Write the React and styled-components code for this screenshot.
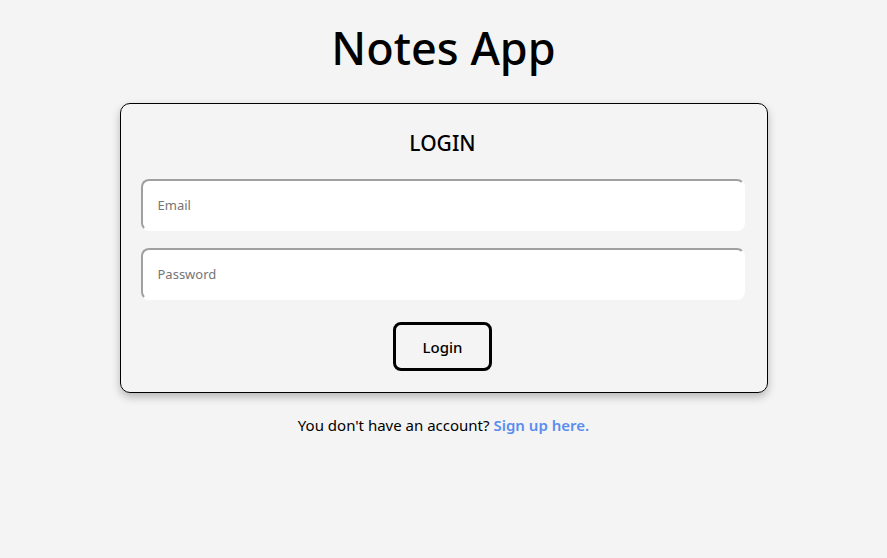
import React from 'react';
import styled, { createGlobalStyle } from 'styled-components';

const GlobalStyle = createGlobalStyle`
    body {
        margin: 0;
        background-color: #f4f4f4;
        font-family: "Noto Sans", "Open Sans", sans-serif;
        color: #000;
    }
`
const Page = styled.div`
    display: flex;
    flex-direction: column;
    align-items: center;
    padding-top: 18px;
`
const Title = styled.h1`
    margin: 0;
    font-size: 45px;
    font-weight: 500;
    line-height: 60px;
`
const Card = styled.form`
    margin-top: 25px;
    width: 648px;
    box-sizing: border-box;
    border: 1px solid #000;
    border-radius: 10px;
    box-shadow: 0 4px 8px rgba(0, 0, 0, 0.25);
    padding: 23px 22px 21px 20px;
    display: flex;
    flex-direction: column;
    align-items: center;
`
const CardTitle = styled.h2`
    margin: 0 0 20px 0;
    font-size: 21px;
    font-weight: 500;
    line-height: 32px;
`
const Input = styled.input`
    width: 100%;
    height: 52px;
    box-sizing: border-box;
    margin-bottom: 17px;
    padding: 0 15px;
    background: #fff;
    border-style: solid;
    border-width: 2px;
    border-color: #a0a0a0 #fff #fff #a0a0a0;
    border-radius: 8px;
    font-family: inherit;
    font-size: 13px;
    outline: none;
    &::placeholder {
        color: #757575;
    }
`
const Button = styled.button`
    margin-top: 5px;
    width: 99px;
    height: 49px;
    background: transparent;
    border: 3px solid #000;
    border-radius: 8px;
    font-family: inherit;
    font-size: 15px;
    font-weight: 500;
    cursor: pointer;
`
const Footer = styled.p`
    margin: 22px 0 0 0;
    font-size: 15px;
`
const Link = styled.a`
    color: #5b8def;
    font-weight: 600;
    text-decoration: none;
`

const App = () => {
    return (
        <Page>
            <GlobalStyle />
            <Title>Notes App</Title>
            <Card onSubmit={e => e.preventDefault()}>
                <CardTitle>LOGIN</CardTitle>
                <Input type="email" placeholder="Email" />
                <Input type="password" placeholder="Password" />
                <Button type="submit">Login</Button>
            </Card>
            <Footer>
                You don't have an account? <Link href="#">Sign up here.</Link>
            </Footer>
        </Page>
    )
}
export default App;
